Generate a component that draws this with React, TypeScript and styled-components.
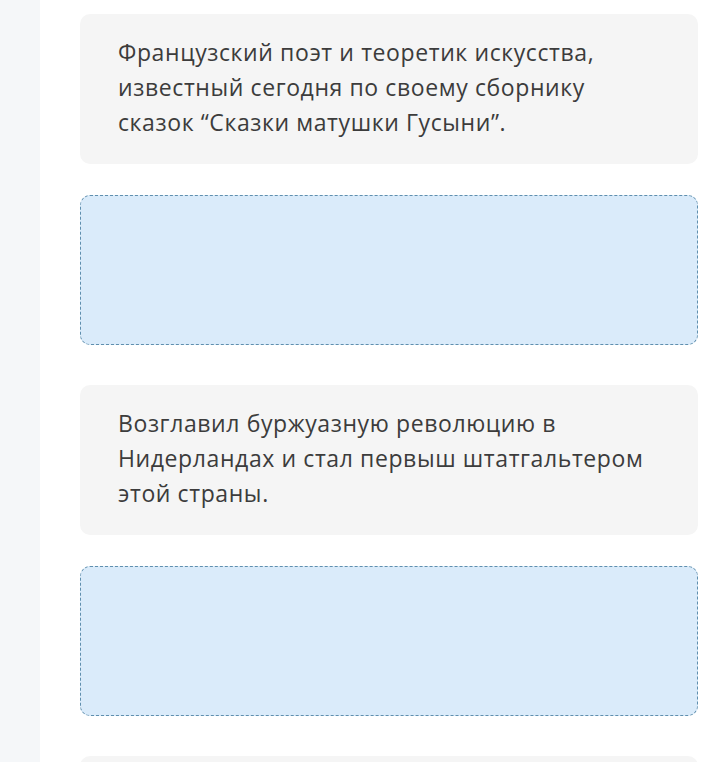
import React from "react";
import styled, { createGlobalStyle } from "styled-components";

const Global = createGlobalStyle`
  html, body { margin: 0; padding: 0; background: #ffffff; }
  body { font-family: "Open Sans", "Noto Sans", sans-serif; }
`;

const Page = styled.div`
  display: flex;
  height: 762px;
  overflow: hidden;
`;

const Sidebar = styled.div`
  width: 40px;
  flex: none;
  background: #f5f7f9;
`;

const Main = styled.main`
  flex: 1;
  padding: 14px 22px 0 40px;
  display: flex;
  flex-direction: column;
`;

const Pair = styled.section`
  display: flex;
  flex-direction: column;
  gap: 31px;
  margin-bottom: 40px;
`;

const Card = styled.div`
  height: 150px;
  flex: none;
  box-sizing: border-box;
  background: #f5f5f5;
  border-radius: 10px;
  padding: 21px 38px;
  color: #3c3c3c;
  font-size: 23px;
  line-height: 35px;
  letter-spacing: 0.6px;
`;

const Drop = styled.div`
  height: 150px;
  flex: none;
  box-sizing: border-box;
  background: #daebfa;
  border: 1px dashed #5f8fae;
  border-radius: 10px;
`;

const items = [
  "Французский поэт и теоретик искусства, известный сегодня по своему сборнику сказок “Сказки матушки Гусыни”.",
  "Возглавил буржуазную революцию в Нидерландах и стал первыш штатгальтером этой страны.",
  "",
];

export default function App() {
  return (
    <>
      <Global />
      <Page>
        <Sidebar />
        <Main>
          {items.map((t, i) => (
            <Pair key={i}>
              <Card>{t}</Card>
              <Drop />
            </Pair>
          ))}
        </Main>
      </Page>
    </>
  );
}
